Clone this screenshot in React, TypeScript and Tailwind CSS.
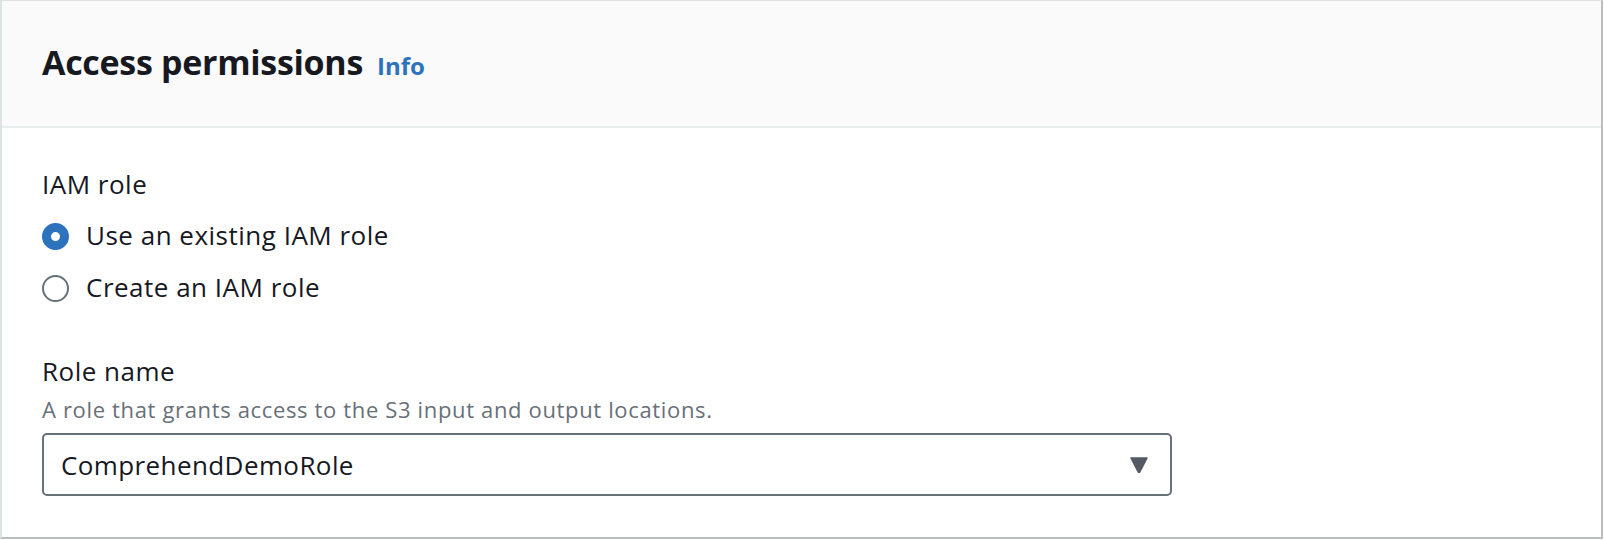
export default function App() {
  const font = { fontFamily: '"Open Sans", "Noto Sans", sans-serif' };
  return (
    <div className="w-[1604px] h-[540px] bg-white text-[#16191f]" style={font}>
      <div className="h-[539px] w-[1603px] border-l-2 border-t border-[#dfe2e2] border-r-2 border-r-[#b9bebf] border-b-2 border-b-[#b9bebf] flex flex-col">
        <div className="h-[127px] bg-[#fafafa] border-b-2 border-[#eaeded] px-[40px] pt-[41px]">
          <h2 className="flex items-baseline gap-[14px] text-[34px] leading-[40px] font-bold tracking-[-0.3px]">
            Access permissions
            <a className="text-[24px] font-bold text-[#2d72bd] tracking-normal">Info</a>
          </h2>
        </div>
        <div className="flex-1 px-[40px] pt-[40px]">
          <div className="text-[26px] leading-[32px] tracking-[0.5px]">IAM role</div>
          <div className="mt-[19px] flex flex-col gap-[20px]">
            <label className="flex items-center gap-[17px] text-[26px] leading-[32px] tracking-[0.5px]">
              <span className="w-[27px] h-[27px] rounded-full border-[9px] border-[#2d72bd] bg-white mt-[2px]" />
              Use an existing IAM role
            </label>
            <label className="flex items-center gap-[17px] text-[26px] leading-[32px] tracking-[0.5px]">
              <span className="w-[27px] h-[27px] rounded-full border-2 border-[#687078] bg-white mt-[2px]" />
              Create an IAM role
            </label>
          </div>
          <div className="mt-[52px] text-[26px] leading-[32px] tracking-[0.5px]">Role name</div>
          <div className="mt-[7px] text-[22px] leading-[30px] text-[#687078] tracking-[0.65px]">
            A role that grants access to the S3 input and output locations.
          </div>
          <div className="mt-[9px] w-[1130px] h-[63px] border-2 border-[#687078] rounded-[5px] flex items-center justify-between pl-[17px] pr-[22px]">
            <span className="text-[26px] leading-[32px] tracking-[0.4px]">ComprehendDemoRole</span>
            <svg width="18" height="16" viewBox="0 0 18 16">
              <path d="M1 1 H17 L9.8 15 Q9 16 8.2 15 Z" fill="#545b64" stroke="#545b64" strokeWidth="1.5" strokeLinejoin="round" />
            </svg>
          </div>
        </div>
      </div>
    </div>
  );
}
